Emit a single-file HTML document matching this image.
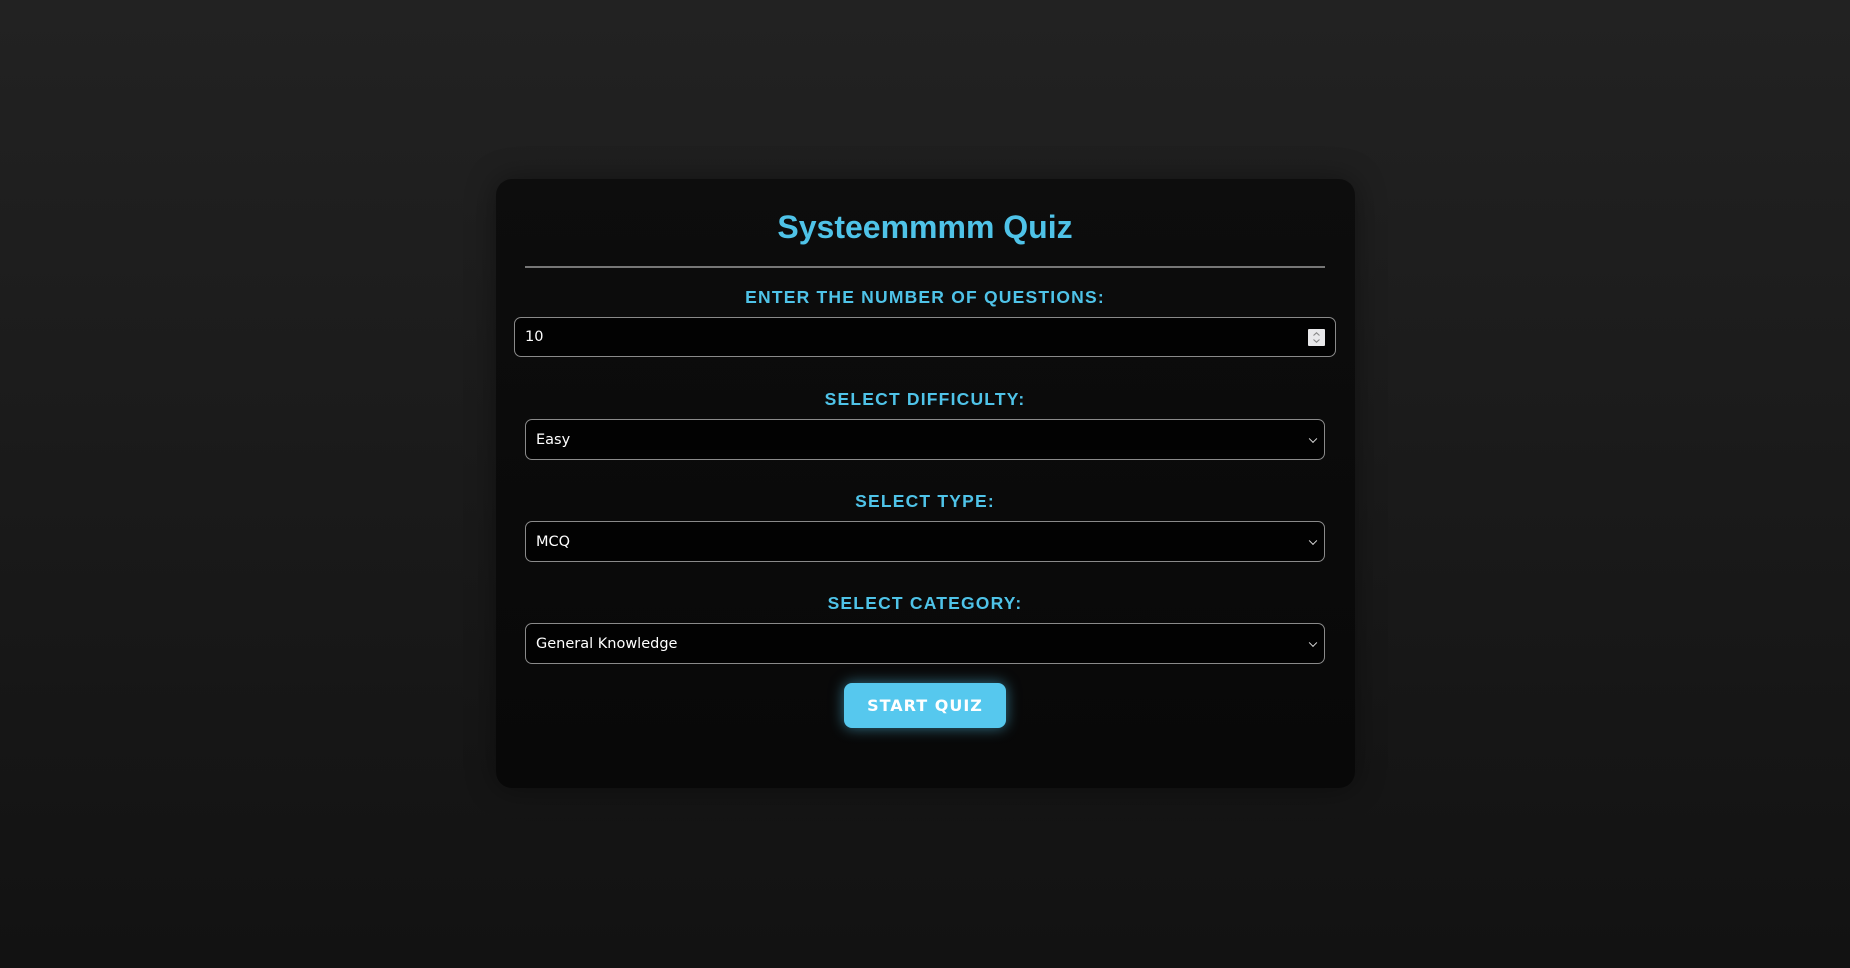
<!DOCTYPE html>
<html><head><meta charset="utf-8"><style>
html,body{margin:0;height:100%}
body{width:1850px;height:968px;background:linear-gradient(#222 0%,#121212 100%);font-family:"Liberation Sans",Arial,sans-serif;position:relative;overflow:hidden}
.card{position:absolute;left:496px;top:179px;width:859px;height:609px;background:linear-gradient(#0d0d0d,#080808);border-radius:16px;box-shadow:0 0 30px rgba(0,0,0,.4)}
h1{position:absolute;left:0;right:0;top:207px;margin:0;text-align:center;color:#4fc3e8;font-size:32px;font-weight:bold;line-height:40px}
.hr{position:absolute;left:525px;width:800px;top:266px;height:2px;background:#777}
.lbl{position:absolute;left:0;right:0;text-align:center;color:#4fc3e8;font-weight:bold;font-size:17.5px;letter-spacing:1.2px;line-height:22px}
.f{position:absolute;background:#020202;border:1px solid #8a8a8a;border-radius:7px;box-sizing:border-box;color:#fff;font-family:"DejaVu Sans",sans-serif;font-size:14.5px;padding-left:10px;display:flex;align-items:center}
.chev{position:absolute;right:8px;top:50%;width:5px;height:5px;border-right:1.5px solid #ddd;border-bottom:1.5px solid #ddd;transform:translateY(-70%) rotate(45deg)}
.spin{position:absolute;right:10px;top:11px;width:17px;height:17px;background:#e8e8ea;border-radius:1px}
.btn{position:absolute;left:844px;top:683px;width:162px;height:45px;background:#56c8ee;border-radius:8px;box-shadow:0 0 14px rgba(86,200,238,.55);color:#fff;font-family:"DejaVu Sans",sans-serif;font-weight:bold;font-size:16px;letter-spacing:1px;display:flex;align-items:center;justify-content:center}
</style></head><body>
<div class="card"></div>
<h1>Systeemmmm Quiz</h1>
<div class="hr"></div>
<div class="lbl" style="top:286px">ENTER THE NUMBER OF QUESTIONS:</div>
<div class="f" style="left:514px;top:317px;width:822px;height:40px">10<div class="spin"><svg width="17" height="17" viewBox="0 0 17 17"><path d="M5.5 6.5L8.5 3.8 11.5 6.5M5.5 10.5L8.5 13.2 11.5 10.5" fill="none" stroke="#888" stroke-width="1.1"/></svg></div></div>
<div class="lbl" style="top:388px">SELECT DIFFICULTY:</div>
<div class="f" style="left:525px;top:419px;width:800px;height:41px">Easy<div class="chev"></div></div>
<div class="lbl" style="top:490px">SELECT TYPE:</div>
<div class="f" style="left:525px;top:521px;width:800px;height:41px">MCQ<div class="chev"></div></div>
<div class="lbl" style="top:592px">SELECT CATEGORY:</div>
<div class="f" style="left:525px;top:623px;width:800px;height:41px">General Knowledge<div class="chev"></div></div>
<div class="btn">START QUIZ</div>
</body></html>
